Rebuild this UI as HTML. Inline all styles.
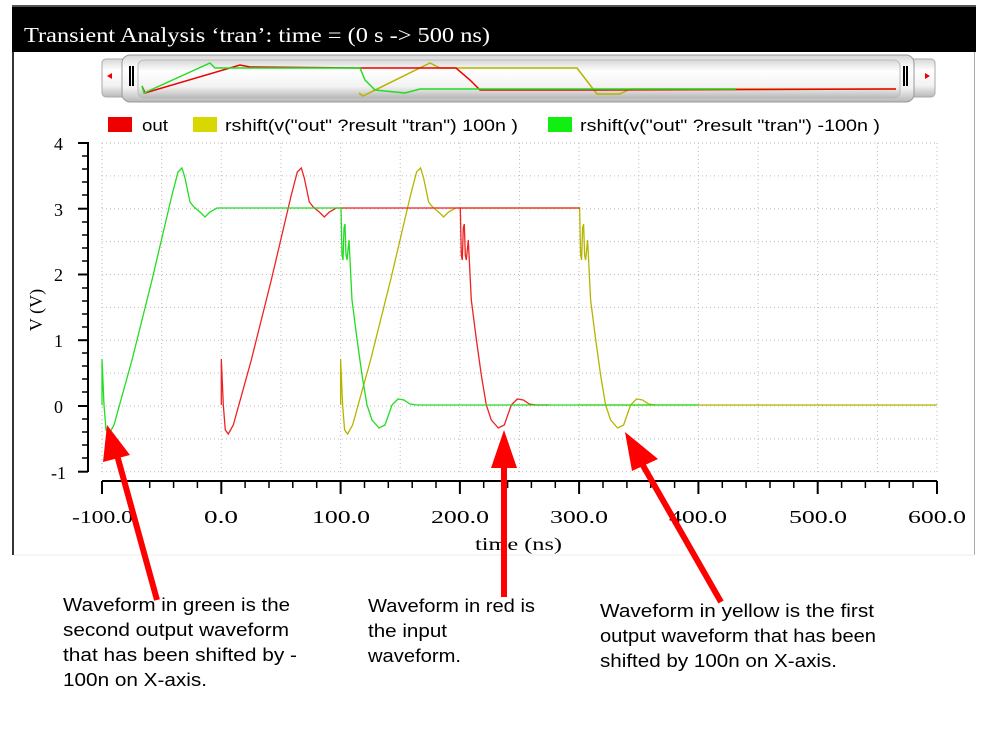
<!DOCTYPE html>
<html><head><meta charset="utf-8"><style>
body{margin:0;width:983px;height:733px;background:#fff;overflow:hidden;font-family:"Liberation Sans",sans-serif;position:relative}
</style></head><body>
<svg width="983" height="733" style="position:absolute;left:0;top:0" font-family="Liberation Serif, serif">
<defs>
<linearGradient id="g1" x1="0" y1="0" x2="0" y2="1"><stop offset="0" stop-color="#d8d8d8"/><stop offset="0.3" stop-color="#fff"/><stop offset="0.7" stop-color="#f2f2f2"/><stop offset="1" stop-color="#b8b8b8"/></linearGradient>
<path id="w" d="M0,405 L0,359 L2,405 L4,430 L7,434 L12,425 L30,360 L50,280 L70,195 L76,172 L80,168 L83,178 L88,202 L92,207 L98,212 L103,217 L108,212 L115,208 L239,208 L240,255 L241,260 L242,228 L243,224 L244,255 L245,260 L247,240 L250,300 L255,339 L260,375 L265,405 L270,420 L277,428 L283,425 L290,405 L296,399 L302,400 L308,404 L315,405"/>
</defs>
<rect x="12" y="5" width="964" height="47" fill="#000"/>
<rect x="12" y="5" width="964" height="2" fill="#555"/>
<text x="24" y="42" fill="#fff" font-size="21" textLength="466" lengthAdjust="spacingAndGlyphs">Transient Analysis ‘tran’: time = (0 s -&gt; 500 ns)</text>
<rect x="12" y="52" width="2" height="503" fill="#333"/>
<rect x="974" y="52" width="1" height="503" fill="#aaa"/>
<line x1="14" y1="555" x2="975" y2="555" stroke="#eee"/>
<rect x="102" y="59" width="833" height="38" rx="4" fill="url(#g1)" stroke="#aaa"/>
<rect x="122" y="55" width="792" height="47" rx="8" fill="url(#g1)" stroke="#999"/>
<rect x="138" y="60" width="762" height="38" rx="6" fill="url(#g1)" stroke="#bbb"/>
<path d="M107,76 l5,-3 v6z" fill="#e00"/><path d="M930,76 l-5,-3 v6z" fill="#e00"/>
<rect x="129" y="66" width="2" height="20" fill="#000"/><rect x="132" y="66" width="2" height="20" fill="#000"/>
<rect x="903" y="66" width="2" height="20" fill="#000"/><rect x="906" y="66" width="2" height="20" fill="#000"/>
<polyline fill="none" stroke="#b5b500" stroke-width="1.5" points="359,93 363,96 430,63 440,68 577,68 590,85 597,94 620,94 630,89 896,89"/>
<polyline fill="none" stroke="#e00" stroke-width="1.5" points="142,86 145,93 240,65 250,67 360,68 456,68 470,80 480,90 560,90 600,90 896,89"/>
<polyline fill="none" stroke="#2d2" stroke-width="1.5" points="142,86 144,93 210,63 215,68 360,68 365,80 375,90 405,93 420,89 640,89 736,89"/>
<g stroke="#bbb" stroke-dasharray="1,3" stroke-width="1">
<line x1="102" y1="143" x2="937" y2="143"/><line x1="102" y1="175.9" x2="937" y2="175.9"/><line x1="102" y1="208.7" x2="937" y2="208.7"/><line x1="102" y1="241.6" x2="937" y2="241.6"/><line x1="102" y1="274.5" x2="937" y2="274.5"/><line x1="102" y1="307.4" x2="937" y2="307.4"/><line x1="102" y1="340.2" x2="937" y2="340.2"/><line x1="102" y1="373.1" x2="937" y2="373.1"/><line x1="102" y1="406" x2="937" y2="406"/><line x1="102" y1="438.9" x2="937" y2="438.9"/><line x1="102" y1="471.7" x2="937" y2="471.7"/>
<line x1="102" y1="143" x2="102" y2="472"/><line x1="161.6" y1="143" x2="161.6" y2="472"/><line x1="221.3" y1="143" x2="221.3" y2="472"/><line x1="280.9" y1="143" x2="280.9" y2="472"/><line x1="340.6" y1="143" x2="340.6" y2="472"/><line x1="400.2" y1="143" x2="400.2" y2="472"/><line x1="459.9" y1="143" x2="459.9" y2="472"/><line x1="519.5" y1="143" x2="519.5" y2="472"/><line x1="579.1" y1="143" x2="579.1" y2="472"/><line x1="638.8" y1="143" x2="638.8" y2="472"/><line x1="698.4" y1="143" x2="698.4" y2="472"/><line x1="758.1" y1="143" x2="758.1" y2="472"/><line x1="817.7" y1="143" x2="817.7" y2="472"/><line x1="877.4" y1="143" x2="877.4" y2="472"/><line x1="937" y1="143" x2="937" y2="472"/>
</g>
<g stroke="#000" stroke-width="2" fill="none">
<line x1="88" y1="142" x2="88" y2="472"/>
<line x1="102" y1="481" x2="937" y2="481"/>
</g>
<g stroke="#000" stroke-width="2">
<line x1="78" y1="143" x2="88" y2="143"/><line x1="78" y1="208.7" x2="88" y2="208.7"/><line x1="78" y1="274.5" x2="88" y2="274.5"/><line x1="78" y1="340.2" x2="88" y2="340.2"/><line x1="78" y1="406" x2="88" y2="406"/><line x1="78" y1="471.7" x2="88" y2="471.7"/>
<line x1="102" y1="481" x2="102" y2="494"/><line x1="221.3" y1="481" x2="221.3" y2="494"/><line x1="340.6" y1="481" x2="340.6" y2="494"/><line x1="459.9" y1="481" x2="459.9" y2="494"/><line x1="579.1" y1="481" x2="579.1" y2="494"/><line x1="698.4" y1="481" x2="698.4" y2="494"/><line x1="817.7" y1="481" x2="817.7" y2="494"/><line x1="937" y1="481" x2="937" y2="494"/>
</g>
<g stroke="#000" stroke-width="1.5">
<line x1="82" y1="156" x2="88" y2="156"/><line x1="82" y1="169" x2="88" y2="169"/><line x1="82" y1="182" x2="88" y2="182"/><line x1="82" y1="195" x2="88" y2="195"/>
<line x1="82" y1="222" x2="88" y2="222"/><line x1="82" y1="235" x2="88" y2="235"/><line x1="82" y1="248" x2="88" y2="248"/><line x1="82" y1="261" x2="88" y2="261"/>
<line x1="82" y1="288" x2="88" y2="288"/><line x1="82" y1="301" x2="88" y2="301"/><line x1="82" y1="314" x2="88" y2="314"/><line x1="82" y1="327" x2="88" y2="327"/>
<line x1="82" y1="353" x2="88" y2="353"/><line x1="82" y1="366" x2="88" y2="366"/><line x1="82" y1="379" x2="88" y2="379"/><line x1="82" y1="392" x2="88" y2="392"/>
<line x1="82" y1="419" x2="88" y2="419"/><line x1="82" y1="432" x2="88" y2="432"/><line x1="82" y1="445" x2="88" y2="445"/><line x1="82" y1="458" x2="88" y2="458"/>
<line x1="125.9" y1="481" x2="125.9" y2="488"/><line x1="149.7" y1="481" x2="149.7" y2="488"/><line x1="173.6" y1="481" x2="173.6" y2="488"/><line x1="197.4" y1="481" x2="197.4" y2="488"/>
<line x1="245.1" y1="481" x2="245.1" y2="488"/><line x1="269" y1="481" x2="269" y2="488"/><line x1="292.8" y1="481" x2="292.8" y2="488"/><line x1="316.7" y1="481" x2="316.7" y2="488"/>
<line x1="364.5" y1="481" x2="364.5" y2="488"/><line x1="388.3" y1="481" x2="388.3" y2="488"/><line x1="412.2" y1="481" x2="412.2" y2="488"/><line x1="436" y1="481" x2="436" y2="488"/>
<line x1="483.7" y1="481" x2="483.7" y2="488"/><line x1="507.6" y1="481" x2="507.6" y2="488"/><line x1="531.4" y1="481" x2="531.4" y2="488"/><line x1="555.3" y1="481" x2="555.3" y2="488"/>
<line x1="603" y1="481" x2="603" y2="488"/><line x1="626.9" y1="481" x2="626.9" y2="488"/><line x1="650.7" y1="481" x2="650.7" y2="488"/><line x1="674.6" y1="481" x2="674.6" y2="488"/>
<line x1="722.3" y1="481" x2="722.3" y2="488"/><line x1="746.1" y1="481" x2="746.1" y2="488"/><line x1="770" y1="481" x2="770" y2="488"/><line x1="793.8" y1="481" x2="793.8" y2="488"/>
<line x1="841.6" y1="481" x2="841.6" y2="488"/><line x1="865.4" y1="481" x2="865.4" y2="488"/><line x1="889.3" y1="481" x2="889.3" y2="488"/><line x1="913.1" y1="481" x2="913.1" y2="488"/>
</g>
<g font-size="18" text-anchor="end" fill="#000">
<text x="63" y="150">4</text><text x="63" y="216">3</text><text x="63" y="281">2</text><text x="63" y="347">1</text><text x="63" y="413">0</text><text x="66" y="479">-1</text>
</g>
<text transform="translate(42,310) rotate(-90)" font-size="18" text-anchor="middle">V (V)</text>
<g font-size="18" lengthAdjust="spacingAndGlyphs">
<text x="72" y="523" textLength="61" lengthAdjust="spacingAndGlyphs">-100.0</text>
<text x="204" y="523" textLength="34" lengthAdjust="spacingAndGlyphs">0.0</text>
<text x="312" y="523" textLength="58" lengthAdjust="spacingAndGlyphs">100.0</text>
<text x="431" y="523" textLength="58" lengthAdjust="spacingAndGlyphs">200.0</text>
<text x="550" y="523" textLength="58" lengthAdjust="spacingAndGlyphs">300.0</text>
<text x="669" y="523" textLength="58" lengthAdjust="spacingAndGlyphs">400.0</text>
<text x="789" y="523" textLength="58" lengthAdjust="spacingAndGlyphs">500.0</text>
<text x="908" y="523" textLength="58" lengthAdjust="spacingAndGlyphs">600.0</text>
<text x="475" y="550" textLength="87" lengthAdjust="spacingAndGlyphs">time (ns)</text>
</g>
<rect x="108" y="117" width="24" height="15" fill="#e00"/>
<rect x="193" y="117" width="24" height="15" fill="#d8d800"/>
<rect x="548" y="117" width="24" height="15" fill="#1e1"/>
<g font-family="Liberation Sans, sans-serif" font-size="17" fill="#000">
<text x="142" y="131" textLength="26" lengthAdjust="spacingAndGlyphs">out</text>
<text x="225" y="131" textLength="293" lengthAdjust="spacingAndGlyphs">rshift(v("out" ?result "tran") 100n )</text>
<text x="580" y="131" textLength="300" lengthAdjust="spacingAndGlyphs">rshift(v("out" ?result "tran") -100n )</text>
</g>
<g fill="none" stroke-width="1.3">
<path d="M579.1,405 L937,405" stroke="#b5b500"/>
<use href="#w" transform="translate(340.6,0)" stroke="#b5b500"/>
<path d="M459.9,208 L580,208" stroke="#e22"/>
<use href="#w" transform="translate(221.3,0)" stroke="#e22"/>
<path d="M536,405 L549,405" stroke="#e22"/>
<use href="#w" transform="translate(102,0)" stroke="#2d2"/>
<path d="M417,405 L698,405" stroke="#2d2"/>
</g>
<g fill="#f00" stroke="#f00">
<line x1="157" y1="600" x2="117" y2="455" stroke-width="6"/>
<path d="M107,425 L130,455 L103,462Z" stroke="none"/>
<line x1="504" y1="597" x2="504" y2="462" stroke-width="6"/>
<path d="M504,430 L517,468 L491,468Z" stroke="none"/>
<line x1="721" y1="602" x2="637" y2="455" stroke-width="6"/>
<path d="M625,432 L658,459 L632,471Z" stroke="none"/>
</g>
<g font-family="Liberation Sans, sans-serif" font-size="18" fill="#000">
<text x="63" y="611" textLength="227" lengthAdjust="spacingAndGlyphs">Waveform in green is the</text>
<text x="63" y="636" textLength="226" lengthAdjust="spacingAndGlyphs">second output waveform</text>
<text x="63" y="661" textLength="234" lengthAdjust="spacingAndGlyphs">that has been shifted by -</text>
<text x="63" y="686" textLength="144" lengthAdjust="spacingAndGlyphs">100n on X-axis.</text>
<text x="368" y="612" textLength="167" lengthAdjust="spacingAndGlyphs">Waveform in red is</text>
<text x="368" y="637" textLength="79" lengthAdjust="spacingAndGlyphs">the input</text>
<text x="368" y="662" textLength="93" lengthAdjust="spacingAndGlyphs">waveform.</text>
<text x="600" y="617" textLength="274" lengthAdjust="spacingAndGlyphs">Waveform in yellow is the first</text>
<text x="600" y="642" textLength="276" lengthAdjust="spacingAndGlyphs">output waveform that has been</text>
<text x="600" y="667" textLength="237" lengthAdjust="spacingAndGlyphs">shifted by 100n on X-axis.</text>
</g>
</svg>
</body></html>
